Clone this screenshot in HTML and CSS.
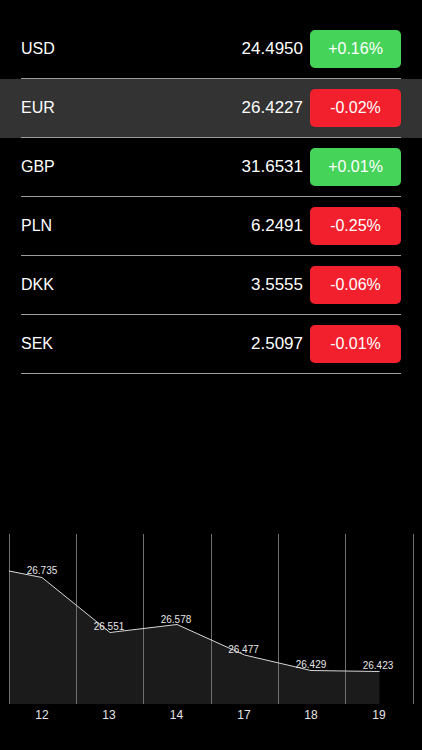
FILE: index.html
```html
<!DOCTYPE html>
<html lang="en">
<head>
    <meta charset="utf-8">
    <title>Rates</title>
    <link rel="stylesheet" href="styles.css">
</head>
<body>
<div class="rates">
    <div class="row">
        <div class="row_body">
            <span class="code">USD</span>
            <span class="value">24.4950</span>
            <span class="change up">+0.16%</span>
        </div>
    </div>
    <div class="row selected">
        <div class="row_body">
            <span class="code">EUR</span>
            <span class="value">26.4227</span>
            <span class="change down">-0.02%</span>
        </div>
    </div>
    <div class="row">
        <div class="row_body">
            <span class="code">GBP</span>
            <span class="value">31.6531</span>
            <span class="change up">+0.01%</span>
        </div>
    </div>
    <div class="row">
        <div class="row_body">
            <span class="code">PLN</span>
            <span class="value">6.2491</span>
            <span class="change down">-0.25%</span>
        </div>
    </div>
    <div class="row">
        <div class="row_body">
            <span class="code">DKK</span>
            <span class="value">3.5555</span>
            <span class="change down">-0.06%</span>
        </div>
    </div>
    <div class="row">
        <div class="row_body">
            <span class="code">SEK</span>
            <span class="value">2.5097</span>
            <span class="change down">-0.01%</span>
        </div>
    </div>
</div>
<div class="chart">
    <svg width="422" height="230" viewBox="0 0 422 230">
        <!-- history of the selected currency -->
        <polygon class="area" points="9,51 42,57.5 110,112.5 177,104.5 244.5,135 311,150.5 379.5,151.5 379.5,184 9,184"/>
        <g class="grid">
            <line x1="9.5" y1="14" x2="9.5" y2="184"/>
            <line x1="76.5" y1="14" x2="76.5" y2="184"/>
            <line x1="143.5" y1="14" x2="143.5" y2="184"/>
            <line x1="211.5" y1="14" x2="211.5" y2="184"/>
            <line x1="278.5" y1="14" x2="278.5" y2="184"/>
            <line x1="345.5" y1="14" x2="345.5" y2="184"/>
            <line x1="413.5" y1="14" x2="413.5" y2="184"/>
        </g>
        <polyline class="trend" points="9,51 42,57.5 110,112.5 177,104.5 244.5,135 311,150.5 379.5,151.5"/>
        <g class="point_label">
            <text x="42" y="53.5">26.735</text>
            <text x="109" y="109.5">26.551</text>
            <text x="176" y="102.5">26.578</text>
            <text x="243.5" y="132.5">26.477</text>
            <text x="311" y="147.5">26.429</text>
            <text x="378" y="149">26.423</text>
        </g>
        <g class="day_label">
            <text x="42" y="198.5">12</text>
            <text x="109" y="198.5">13</text>
            <text x="176.5" y="198.5">14</text>
            <text x="244" y="198.5">17</text>
            <text x="311" y="198.5">18</text>
            <text x="379" y="198.5">19</text>
        </g>
    </svg>
</div>
</body>
</html>
```
FILE: styles.css
```css
*{margin: 0;padding: 0;box-sizing: border-box;}
html,body{background: #000;}
body{height: 750px;overflow: hidden;display: flex;flex-direction: column;font-family: "Liberation Sans", Arial, sans-serif;color: #fff;}
.rates{padding-top: 20px;}
.row{padding: 0 21px;}
.row.selected{background: #333;}
.row_body{height: 59px;display: flex;align-items: center;border-bottom: 1px solid #9c9c9c;}
.code{flex: 1;font-size: 16px;}
.value{font-size: 17px;margin-right: 7px;}
.change{width: 91px;height: 38px;line-height: 38px;border-radius: 5px;text-align: center;font-size: 16px;}
.change.up{background: #46d35a;}
.change.down{background: #f2202d;}
.chart{margin-top: auto;height: 230px;}
.chart svg{display: block;}
.area{fill: #1b1b1b;}
.grid line{stroke: #6f6f6f;stroke-width: 1;}
.trend{fill: none;stroke: #d6d6d6;stroke-width: 1;}
.point_label text{font-family: "Liberation Sans", Arial, sans-serif;font-size: 10px;fill: #e6e6e6;text-anchor: middle;}
.day_label text{font-family: "Liberation Sans", Arial, sans-serif;font-size: 12px;fill: #e6e6e6;text-anchor: middle;}
```
